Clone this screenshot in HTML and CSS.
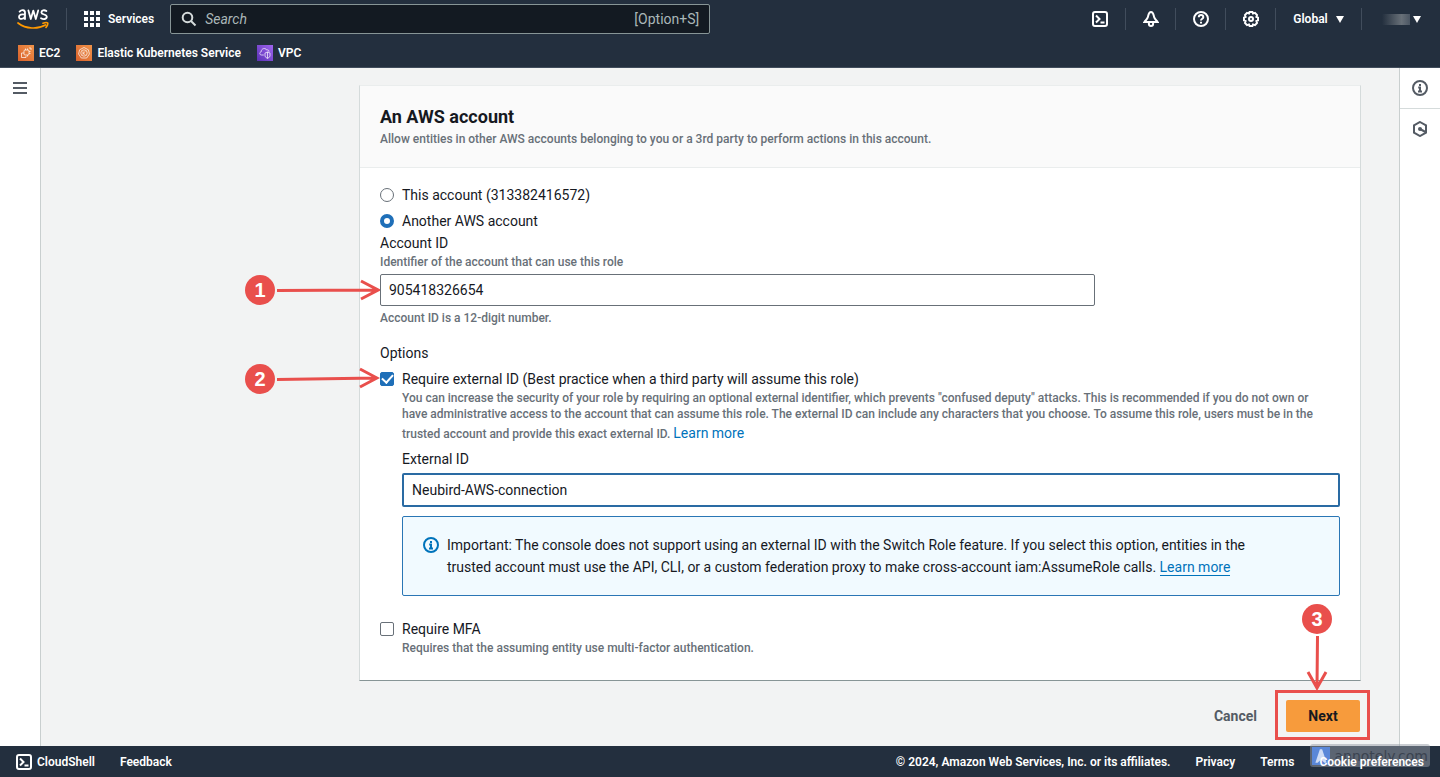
FILE: index.html
```html
<!DOCTYPE html>
<html lang="en">
<head>
<meta charset="utf-8">
<title>Create role | IAM | Global</title>
<link rel="stylesheet" href="styles.css">
</head>
<body>
<div class="console">
  <header class="topbar">
    <div class="topbar-row">
      <a class="logo" href="#" aria-label="AWS home">
        <svg width="32" height="22" viewBox="0 0 32 22" fill="none" stroke-linecap="round" stroke-linejoin="round">
          <path class="logo-mark" d="M2.6 3.6C4.6 1.6 8 1.6 8 4.8V11M8 6.6C4.6 5.8 2 6.8 2 8.8C2 12 6.8 11.4 8 8.4M11.4 2.4L13.8 11L16.3 2.6L18.8 11L21.2 2.4M29.4 3C27.2 1.6 24.4 2.2 24.4 4.4C24.4 7 29.8 6 29.8 8.8C29.8 11.4 26.2 11.6 24 10.2"/>
          <path class="logo-smile" d="M1 15C9 21.200 21 21.400 28.4 17M26 15.200C28.4 14.400 30.2 14.400 30.6 15C31 15.800 30.4 17.600 29 19.400"/>
        </svg>
      </a>
      <button class="services" type="button">
        <svg width="16" height="16" viewBox="0 0 16 16" fill="currentColor"><path d="M0 0h4v4H0zM6 0h4v4H6zM12 0h4v4h-4zM0 6h4v4H0zM6 6h4v4H6zM12 6h4v4h-4zM0 12h4v4H0zM6 12h4v4H6zM12 12h4v4h-4z"/></svg>
        <span>Services</span>
      </button>
      <label class="search">
        <svg width="16" height="16" viewBox="0 0 16 16" fill="none" stroke="currentColor" stroke-width="2"><circle cx="6.5" cy="6.5" r="4.8"/><path d="M10 10l4.5 4.5"/></svg>
        <input type="text" placeholder="Search" aria-label="Search">
        <span class="search-hint">[Option+S]</span>
      </label>
      <nav class="tools" aria-label="Tools">
        <button class="tool" type="button" aria-label="CloudShell"><svg class="icon" viewBox="0 0 16 16"><rect x="1" y="1" width="14" height="14" rx="2"/><path d="M4 4.5L7.5 8L4 11.5M8.5 11.5H12.5"/></svg></button>
        <button class="tool" type="button" aria-label="Notifications"><svg class="icon" viewBox="0 0 16 16"><path d="M8 1C5.5 1 5.4 4.2 4.9 6C4.4 8 3 9 1.4 11H14.6C13 9 11.6 8 11.1 6C10.6 4.2 10.5 1 8 1ZM5.9 11V13Q5.9 15 8 15Q10.1 15 10.1 13V11"/></svg></button>
        <button class="tool" type="button" aria-label="Help"><svg class="icon" viewBox="0 0 16 16"><circle cx="8" cy="8" r="7"/><path d="M5.8 6.2C5.8 3.4 10.3 3.4 10.3 6.2C10.3 7.8 8 7.8 8 9.6M8 10.8V12.6"/></svg></button>
        <button class="tool" type="button" aria-label="Settings"><svg class="icon" viewBox="0 0 16 16"><path d="M6.6 1H9.4L10 2.6L12 1.9L14 4L13.4 6L15 6.7V9.4L13.4 10L14 12L12 14.1L10 13.4L9.4 15H6.6L6 13.4L4 14.1L2 12L2.6 10L1 9.4V6.7L2.6 6L2 4L4 1.9L6 2.6Z"/><circle cx="8" cy="8" r="2"/></svg></button>
        <button class="tool tool-region" type="button"><span>Global</span><i class="caret"></i></button>
        <button class="tool tool-account" type="button" aria-label="Account"><span class="redacted"></span><i class="caret"></i></button>
      </nav>
    </div>
    <nav class="favorites" aria-label="Favorites">
      <a href="#"><svg class="service-icon service-compute" viewBox="0 0 16 16"><rect x="6" y="5" width="5" height="5" rx="1"/><path d="M7.5 5V3.5M9.5 5V3.5M11 6.5H12.5M11 8.5H12.5M9.5 10V11.5M6 8H3.5V12.5H8V11M11 3L13 3V5"/></svg><span>EC2</span></a>
      <a href="#"><svg class="service-icon service-compute" viewBox="0 0 16 16"><path d="M8 2.5L12.4 4.8L13.4 9L10.7 13H5.3L2.6 9L3.6 4.8Z"/><circle cx="8" cy="8" r="3.2"/><path d="M7 6.4V9.8M9.4 6.4L7.2 8.2L9.4 9.8"/></svg><span>Elastic Kubernetes Service</span></a>
      <a href="#"><svg class="service-icon service-network" viewBox="0 0 16 16"><path d="M6.8 10H4.5C2.4 10 2.2 7.2 4.2 6.8C4 3.4 8.6 2.4 9.6 5C11.4 4.4 12 5.6 12 6.8M8 8L10.5 7L13 8V11Q12.6 12.6 10.5 13.4Q8.4 12.6 8 11ZM10.5 7V13.4"/></svg><span>VPC</span></a>
    </nav>
  </header>

  <div class="workspace">
    <aside class="rail rail-left">
      <button class="rail-button" type="button" aria-label="Open navigation"><svg width="14" height="12" viewBox="0 0 14 12" stroke="currentColor" stroke-width="2"><path d="M0 1H14M0 6H14M0 11H14"/></svg></button>
    </aside>

    <main class="content">
      <form class="wizard">
        <section class="card">
          <header class="card-header">
            <h2>An AWS account</h2>
            <p class="hint">Allow entities in other AWS accounts belonging to you or a 3rd party to perform actions in this account.</p>
          </header>
          <div class="card-body">
            <div class="choices">
              <label class="choice"><input type="radio" name="account"><span>This account (313382416572)</span></label>
              <label class="choice"><input type="radio" name="account" checked><span>Another AWS account</span></label>
            </div>
            <div class="field">
              <label class="label" for="account-id">Account ID</label>
              <p class="hint">Identifier of the account that can use this role</p>
              <div class="anchor account-input">
                <input class="text-input" id="account-id" type="text" value="905418326654">
                <div class="callout callout-side">
                  <span class="badge">1</span>
                  <svg class="arrow" width="104" height="24" viewBox="0 0 104 24"><path d="M1 12.500L101 12M85 3L102 12L85 21"/></svg>
                </div>
              </div>
              <p class="hint constraint">Account ID is a 12-digit number.</p>
            </div>
            <div class="options">
              <p class="label">Options</p>
              <div class="anchor">
                <label class="choice"><input type="checkbox" checked><span>Require external ID (Best practice when a third party will assume this role)</span></label>
                <div class="callout callout-side">
                  <span class="badge">2</span>
                  <svg class="arrow" width="104" height="24" viewBox="0 0 104 24"><path d="M1 12.500L101 11M84 2L101 11L84 20"/></svg>
                </div>
              </div>
              <div class="option-detail">
                <p class="hint">You can increase the security of your role by requiring an optional external identifier, which prevents "confused deputy" attacks. This is recommended if you do not own or have administrative access to the account that can assume this role. The external ID can include any characters that you choose. To assume this role, users must be in the trusted account and provide this exact external ID. <a class="link" href="#">Learn more</a></p>
                <label class="label" for="external-id">External ID</label>
                <input class="text-input text-input-active" id="external-id" type="text" value="Neubird-AWS-connection">
                <div class="alert">
                  <svg class="icon" viewBox="0 0 16 16"><circle cx="8" cy="8" r="7"/><path d="M8 4V6M6.200 7.500H8V11M6 11.500H10"/></svg>
                  <p>Important: The console does not support using an external ID with the Switch Role feature. If you select this option, entities in the trusted account must use the API, CLI, or a custom federation proxy to make cross-account iam:AssumeRole calls. <a class="link link-underlined" href="#">Learn more</a></p>
                </div>
              </div>
              <label class="choice mfa"><input type="checkbox"><span>Require MFA</span></label>
              <p class="hint mfa-hint">Requires that the assuming entity use multi-factor authentication.</p>
            </div>
          </div>
        </section>
        <div class="actions">
          <button class="button button-link" type="button">Cancel</button>
          <div class="anchor">
            <button class="button button-primary" type="button">Next</button>
            <div class="highlight"></div>
            <div class="callout callout-below">
              <span class="badge">3</span>
              <svg class="arrow" width="24" height="56" viewBox="0 0 24 56"><path d="M12.500 1L12 52M3 37L12 53L21 37"/></svg>
            </div>
          </div>
        </div>
      </form>
    </main>

    <aside class="rail rail-right">
      <button class="rail-button" type="button" aria-label="Info"><svg class="icon" viewBox="0 0 16 16"><circle cx="8" cy="8" r="7"/><path d="M8 4V6M6.200 7.500H8V11M6 11.500H10"/></svg></button>
      <button class="rail-button" type="button" aria-label="Tutorials"><svg class="icon" viewBox="0 0 16 16"><path d="M8 1L14 4.400V11.600L8 15L2 11.600V4.400Z"/><circle class="dot" cx="8" cy="8" r="2"/><path d="M8 8L13.500 11"/></svg></button>
    </aside>
  </div>

  <footer class="footer">
    <div class="watermark">
      <svg width="18" height="18" viewBox="0 0 16 16"><rect class="watermark-tile" width="16" height="16"/><path class="watermark-mark" d="M3 14L7 2H9L13 14H11L8 11L5 14Z"/></svg>
      <span>annotely.com</span>
    </div>
    <div class="footer-group">
      <a class="shell-link" href="#"><svg class="icon" viewBox="0 0 16 16"><rect x="1" y="1" width="14" height="14" rx="2"/><path d="M4 4.500L7.500 8L4 11.500M8.500 11.500H12.500"/></svg>CloudShell</a>
      <a href="#">Feedback</a>
    </div>
    <div class="footer-group">
      <span>© 2024, Amazon Web Services, Inc. or its affiliates.</span>
      <a href="#">Privacy</a>
      <a href="#">Terms</a>
      <a href="#">Cookie preferences</a>
    </div>
  </footer>
</div>
</body>
</html>
```
FILE: styles.css
```css
:root {
  --navy: #232f3e;
  --blue: #0073bb;
  --ink: #16191f;
  --grey: #687078;
  --red: #e94f4c;
}

* {
  box-sizing: border-box;
}

body {
  margin: 0;
  color: var(--ink);
  font: 14px/22px Roboto, "Noto Sans", sans-serif;
}

h2,
p {
  margin: 0;
}

button,
input {
  font: inherit;
  color: inherit;
}

button {
  padding: 0;
  border: 0;
  background: none;
}

a {
  color: inherit;
  text-decoration: none;
}

svg {
  flex: none;
}

.console {
  display: flex;
  flex-direction: column;
  min-height: 100vh;
}

.icon {
  width: 16px;
  height: 16px;
  fill: none;
  stroke: currentColor;
  stroke-width: 2;
}

.icon .dot {
  fill: currentColor;
  stroke: none;
}

/* Top bar */

.topbar {
  background: var(--navy);
  color: #fff;
  border-bottom: 1px solid #414d5c;
  font-size: 12px;
  font-weight: 600;
}

.topbar-row {
  display: flex;
  align-items: center;
  height: 38px;
}

.logo {
  display: flex;
  padding: 0 17px;
  border-right: 1px solid #414d5c;
}

.logo-mark {
  stroke: #fff;
  stroke-width: 1.8;
}

.logo-smile {
  stroke: #f90;
  stroke-width: 1.7;
}

.services {
  display: flex;
  align-items: center;
  gap: 8px;
  padding: 0 16px 0 17px;
}

.search {
  display: flex;
  align-items: center;
  gap: 8px;
  width: 540px;
  height: 30px;
  padding: 0 10px;
  border: 1px solid #879596;
  border-radius: 2px;
  background: #131a22;
  color: #d5dbdb;
  font-size: 14px;
  font-weight: 400;
}

.search input {
  flex: 1;
  min-width: 0;
  padding: 0;
  border: 0;
  outline: 0;
  background: none;
}

.search input::placeholder {
  color: #aab7b8;
  font-style: italic;
}

.search-hint {
  color: #aab7b8;
}

.tools {
  display: flex;
  margin-left: auto;
}

.tool {
  display: flex;
  align-items: center;
  justify-content: center;
  gap: 8px;
  width: 50px;
  height: 22px;
}

.tool + .tool {
  border-left: 1px solid #414d5c;
}

.tool-region {
  width: 86px;
}

.tool-account {
  width: 79px;
  gap: 3px;
}

.caret {
  border: 4px solid transparent;
  border-top: 7px solid currentColor;
  border-bottom: 0;
}

.redacted {
  width: 28px;
  height: 11px;
  background: linear-gradient(90deg, var(--navy), #687078 70%, #4b5663);
}

.favorites {
  display: flex;
  gap: 16px;
  height: 29px;
  padding: 0 18px;
  align-items: center;
}

.favorites a {
  display: flex;
  align-items: center;
  gap: 5px;
}

.service-icon {
  width: 16px;
  height: 16px;
  fill: none;
  stroke: #fff;
  stroke-width: 0.7;
}

.service-compute {
  background: linear-gradient(45deg, #d8602b, #f0944a);
}

.service-network {
  background: linear-gradient(45deg, #5a30b5, #a066f0);
}

/* Workspace */

.workspace {
  display: flex;
  flex: 1;
  background: #f2f3f3;
}

.rail {
  flex: none;
  width: 41px;
  background: #fff;
  color: #545b64;
}

.rail-left {
  border-right: 1px solid #c9cfcf;
}

.rail-right {
  border-left: 1px solid #c9cfcf;
}

.rail-button {
  display: flex;
  align-items: center;
  justify-content: center;
  width: 40px;
  height: 40px;
}

.rail-button + .rail-button {
  height: 41px;
  border-top: 1px solid #d5dbdb;
}

.content {
  flex: 1;
  min-width: 0;
  padding: 17px 38px 14px 318px;
}

.card {
  background: #fff;
  border: 1px solid #d5dbdb;
  border-top-color: #eaeded;
  border-bottom-color: #879596;
}

.card-header {
  padding: 20px;
  background: #fafafa;
  border-bottom: 1px solid #eaeded;
}

.card-header h2 {
  font-size: 18px;
  line-height: 22px;
  font-weight: 700;
}

.hint {
  color: var(--grey);
  font-size: 12px;
  line-height: 16px;
  font-weight: 500;
}

.card-header .hint {
  margin-top: 3px;
}

.card-body {
  padding: 16px 20px 24px;
}

.choices {
  display: grid;
  gap: 4px;
}

.choice {
  display: flex;
  align-items: center;
  gap: 8px;
}

.choice input {
  appearance: none;
  flex: none;
  display: grid;
  place-items: center;
  width: 14px;
  height: 14px;
  margin: 0;
  border: 1px solid var(--grey);
  border-radius: 2px;
  background: #fff;
}

.choice input[type="radio"] {
  border-radius: 50%;
}

.choice input[type="radio"]:checked {
  border: 4px solid #1f6fb8;
}

.choice input[type="checkbox"]:checked {
  border-color: #1f6fb8;
  background: #1f6fb8;
}

.choice input[type="checkbox"]:checked::before {
  content: "";
  width: 9px;
  height: 5px;
  margin-bottom: 3px;
  border: solid #fff;
  border-width: 0 0 2px 2px;
  rotate: -48deg;
}

.label {
  display: block;
}

.anchor {
  position: relative;
}

.account-input {
  max-width: 715px;
  margin-top: 4px;
}

.text-input {
  display: block;
  width: 100%;
  height: 32px;
  padding: 0 8px;
  border: 1px solid var(--grey);
  border-radius: 2px;
  background: #fff;
}

.text-input-active {
  border: 2px solid #2a6ba3;
  outline: 0;
}

.constraint {
  margin-top: 4px;
}

.options {
  margin-top: 16px;
}

.options > .anchor {
  margin-top: 4px;
}

.option-detail {
  padding-left: 22px;
}

.option-detail .hint {
  padding-right: 12px;
}

.link {
  color: var(--blue);
  font-size: 14px;
  line-height: 22px;
  font-weight: 400;
}

.link-underlined {
  border-bottom: 1px solid currentColor;
}

.option-detail .label {
  margin-top: 4px;
}

.option-detail .text-input {
  height: 34px;
  margin-top: 3px;
}

.alert {
  display: flex;
  gap: 8px;
  margin-top: 9px;
  padding: 17px 68px 17px 20px;
  border: 1px solid #2a76b5;
  border-radius: 2px;
  background: #f1faff;
}

.alert .icon {
  margin-top: 3px;
  color: var(--blue);
}

.mfa {
  margin-top: 22px;
}

.mfa-hint {
  padding-left: 22px;
}

.actions {
  display: flex;
  justify-content: flex-end;
  gap: 8px;
  padding: 19px 1px 0;
}

.button {
  min-width: 74px;
  height: 32px;
  padding: 0 21px;
  border-radius: 2px;
  font-weight: 700;
}

.button-link {
  color: #545b64;
}

.button-primary {
  background: #f79b3c;
}

/* Step callouts */

.callout {
  position: absolute;
  display: flex;
  align-items: center;
  gap: 1px;
  color: var(--red);
}

.callout-side {
  top: 50%;
  right: 100%;
  translate: 0 -50%;
}

.callout-below {
  flex-direction: column;
  bottom: 100%;
  left: 42%;
  margin-bottom: 9px;
  translate: -50% 0;
}

.badge {
  display: grid;
  place-items: center;
  width: 30px;
  height: 30px;
  border-radius: 50%;
  background: var(--red);
  color: #fff;
  font: 700 20px/30px "Liberation Sans", sans-serif;
}

.arrow {
  fill: none;
  stroke: currentColor;
  stroke-width: 3;
}

.highlight {
  position: absolute;
  inset: -10px -10px -8px -11px;
  border: 3px solid var(--red);
  pointer-events: none;
}

/* Footer */

.footer {
  position: relative;
  display: flex;
  justify-content: space-between;
  align-items: center;
  height: 31px;
  padding: 0 16px;
  background: var(--navy);
  color: #fff;
  font-size: 12px;
  font-weight: 600;
}

.footer-group {
  position: relative;
  display: flex;
  gap: 25px;
}

.shell-link {
  display: flex;
  align-items: center;
  gap: 5px;
}

.watermark {
  position: absolute;
  right: 10px;
  bottom: 10px;
  display: flex;
  align-items: center;
  gap: 4px;
  height: 23px;
  padding: 0 2px;
  border-radius: 3px;
  background: rgb(150 155 165 / 50%);
  color: #3b4350;
  font: 400 14px/22px "DejaVu Sans", sans-serif;
}

.watermark-tile {
  fill: #5a87d8;
}

.watermark-mark {
  fill: #cfdcf5;
}
```
